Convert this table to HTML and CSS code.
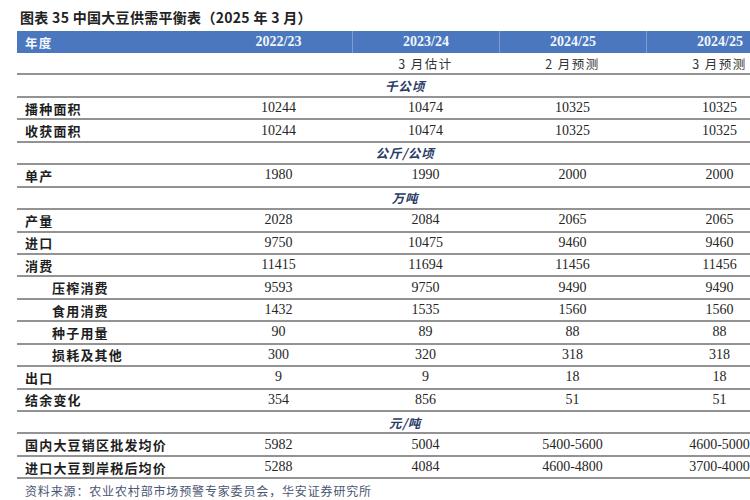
FILE: index.html
```html
<!DOCTYPE html>
<html lang="zh-CN">
<head>
<meta charset="utf-8">
<title>中国大豆供需平衡表</title>
<link rel="stylesheet" href="styles.css">
</head>
<body>
<div class="page">
  <h1 class="title">图表 35 中国大豆供需平衡表（2025 年 3 月）</h1>
  <div class="table">
    <div class="row head">
      <div class="lab">年度</div>
      <div class="num">2022/23</div>
      <div class="num sep">2023/24</div>
      <div class="num sep">2024/25</div>
      <div class="num sep">2024/25</div>
    </div>
    <div class="row sub">
      <div class="lab"></div>
      <div class="note"></div>
      <div class="note">3 月估计</div>
      <div class="note">2 月预测</div>
      <div class="note">3 月预测</div>
    </div>
    <div class="row unit"><div class="u">千公顷</div></div>
    <div class="row"><div class="lab">播种面积</div><div class="num">10244</div><div class="num">10474</div><div class="num">10325</div><div class="num">10325</div></div>
    <div class="row"><div class="lab">收获面积</div><div class="num">10244</div><div class="num">10474</div><div class="num">10325</div><div class="num">10325</div></div>
    <div class="row unit"><div class="u">公斤/公顷</div></div>
    <div class="row"><div class="lab">单产</div><div class="num">1980</div><div class="num">1990</div><div class="num">2000</div><div class="num">2000</div></div>
    <div class="row unit"><div class="u">万吨</div></div>
    <div class="row"><div class="lab">产量</div><div class="num">2028</div><div class="num">2084</div><div class="num">2065</div><div class="num">2065</div></div>
    <div class="row"><div class="lab">进口</div><div class="num">9750</div><div class="num">10475</div><div class="num">9460</div><div class="num">9460</div></div>
    <div class="row"><div class="lab">消费</div><div class="num">11415</div><div class="num">11694</div><div class="num">11456</div><div class="num">11456</div></div>
    <div class="row"><div class="lab ind">压榨消费</div><div class="num">9593</div><div class="num">9750</div><div class="num">9490</div><div class="num">9490</div></div>
    <div class="row"><div class="lab ind">食用消费</div><div class="num">1432</div><div class="num">1535</div><div class="num">1560</div><div class="num">1560</div></div>
    <div class="row"><div class="lab ind">种子用量</div><div class="num">90</div><div class="num">89</div><div class="num">88</div><div class="num">88</div></div>
    <div class="row"><div class="lab ind">损耗及其他</div><div class="num">300</div><div class="num">320</div><div class="num">318</div><div class="num">318</div></div>
    <div class="row"><div class="lab">出口</div><div class="num">9</div><div class="num">9</div><div class="num">18</div><div class="num">18</div></div>
    <div class="row"><div class="lab">结余变化</div><div class="num">354</div><div class="num">856</div><div class="num">51</div><div class="num">51</div></div>
    <div class="row unit"><div class="u">元/吨</div></div>
    <div class="row"><div class="lab">国内大豆销区批发均价</div><div class="num">5982</div><div class="num">5004</div><div class="num">5400-5600</div><div class="num">4600-5000</div></div>
    <div class="row"><div class="lab">进口大豆到岸税后均价</div><div class="num">5288</div><div class="num">4084</div><div class="num">4600-4800</div><div class="num">3700-4000</div></div>
  </div>
  <p class="source">资料来源：农业农村部市场预警专家委员会，华安证券研究所</p>
</div>
</body>
</html>
```

FILE: styles.css
```css
html, body {
  margin: 0;
  padding: 0;
  background: #ffffff;
  overflow: hidden;
}

.page {
  width: 750px;
  height: 500px;
  overflow: hidden;
  font-family: "Noto Sans CJK SC", sans-serif;
  color: #222;
}

.title {
  margin: 0;
  height: 31px;
  box-sizing: border-box;
  padding: 7px 0 0 20px;
  font-size: 14px;
  line-height: 20px;
  font-weight: 700;
  color: #222;
  white-space: nowrap;
  letter-spacing: 0.3px;
}

.table {
  margin-left: 17px;
  width: 776px;
}

.row {
  display: grid;
  grid-template-columns: 188px repeat(4, 147px);
  align-items: center;
  height: 22.44px;
  box-sizing: border-box;
  border-bottom: 2px solid #939393;
}

.row.head {
  height: 22px;
  background: #4a77be;
  border-bottom: none;
  color: #ffffff;
  align-items: stretch;
}

.row.head .lab {
  display: flex;
  align-items: center;
  color: #f4f6fb;
  font-size: 12.5px;
}

.row.head .num {
  display: flex;
  align-items: center;
  justify-content: center;
  color: #f2f5fb;
  font-weight: 700;
  font-size: 14px;
}

.row.head .sep {
  border-left: 1px solid #7d9cd0;
}

.lab {
  padding-left: 8px;
  font-size: 13px;
  font-weight: 700;
  letter-spacing: 1.2px;
  white-space: nowrap;
  color: #1e1e1e;
}

.lab.ind {
  padding-left: 35px;
}

.num {
  text-align: center;
  font-family: "Liberation Serif", "Times New Roman", serif;
  font-size: 14px;
  color: #262626;
}

.note {
  text-align: center;
  font-size: 12.5px;
  letter-spacing: 1.5px;
  color: #333;
}

.row.unit {
  display: flex;
  justify-content: center;
}

.u {
  font-size: 12.5px;
  font-weight: 700;
  font-style: italic;
  letter-spacing: 0.8px;
  color: #2a3b66;
}

.source {
  margin: 3px 0 0 25px;
  font-size: 12px;
  line-height: 18px;
  letter-spacing: 0.85px;
  color: #4a5672;
  white-space: nowrap;
}
```
